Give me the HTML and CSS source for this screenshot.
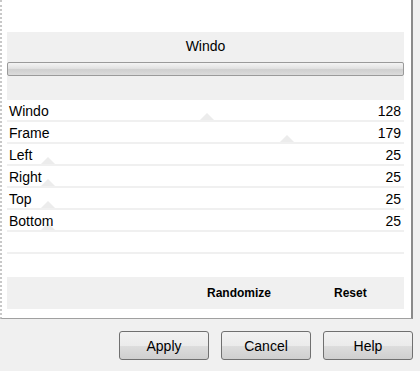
FILE: index.html
```html
<!DOCTYPE html>
<html lang="en">
<head>
  <meta charset="UTF-8">
  <title>Windo</title>
  <link rel="stylesheet" href="styles.css">
</head>
<body>
  <div class="panel">
    <div class="header">
      <div class="title">Windo</div>
      <div class="slider"></div>
    </div>

    <div class="rows">
      <div class="row"><span class="thumb" style="left: 193px;"></span><span>Windo</span><span>128</span></div>
      <div class="row"><span class="thumb" style="left: 273px;"></span><span>Frame</span><span>179</span></div>
      <div class="row"><span class="thumb" style="left: 34px;"></span><span>Left</span><span>25</span></div>
      <div class="row"><span class="thumb" style="left: 34px;"></span><span>Right</span><span>25</span></div>
      <div class="row"><span class="thumb" style="left: 34px;"></span><span>Top</span><span>25</span></div>
      <div class="row"><span class="thumb" style="left: 34px;"></span><span>Bottom</span><span>25</span></div>
      <div class="row"></div>
    </div>

    <div class="footer">
      <span class="randomize">Randomize</span>
      <span class="reset">Reset</span>
    </div>
  </div>

  <div class="buttons">
    <button class="btn">Apply</button>
    <button class="btn">Cancel</button>
    <button class="btn">Help</button>
  </div>
</body>
</html>
```

FILE: styles.css
```css
body {
  margin: 0;
  background: #f0f0f0;
  font-family: "Liberation Sans", Arial, sans-serif;
  font-size: 14px;
  color: #000;
}

.panel {
  box-sizing: border-box;
  width: 413px;
  height: 319px;
  padding: 32px 7px 0 5px;
  background: #fff;
  border-left: 2px dotted #c8c8c8;
  border-right: 2px solid #8a8a8a;
  border-bottom: 1px solid #a0a0a0;
}

.header {
  height: 68px;
  padding-top: 6px;
  box-sizing: border-box;
  background: #f0f0f0;
}

.title {
  text-align: center;
  line-height: 16px;
}

.slider {
  margin-top: 8px;
  height: 14px;
  box-sizing: border-box;
  border: 1px solid #9a9a9a;
  border-radius: 2px;
  background: linear-gradient(to bottom, #f4f4f4 0%, #e2e2e2 45%, #cfcfcf 55%, #dcdcdc 100%);
}

.row {
  position: relative;
  height: 22px;
  box-sizing: border-box;
  border-bottom: 2px solid #f0f0f0;
  padding: 2px 3px 0 2px;
  display: flex;
  justify-content: space-between;
  align-items: center;
  line-height: 18px;
}

.row span {
  position: relative;
}

.row .thumb {
  position: absolute;
  bottom: 0;
  width: 0;
  height: 0;
  border-left: 7px solid transparent;
  border-right: 7px solid transparent;
  border-bottom: 7px solid #ececec;
}

.footer {
  margin-top: 23px;
  height: 32px;
  background: #f0f0f0;
  display: flex;
  align-items: center;
  padding-left: 200px;
  font-size: 12px;
  font-weight: bold;
}

.reset {
  margin-left: 63px;
}

.buttons {
  display: flex;
  justify-content: flex-end;
  gap: 12px;
  padding: 12px 7px 0 0;
}

.btn {
  width: 90px;
  height: 29px;
  border: 1px solid #707070;
  border-radius: 3px;
  background: linear-gradient(to bottom, #f2f2f2 0%, #ebebeb 50%, #dddddd 51%, #cfcfcf 100%);
  font-family: "Liberation Sans", Arial, sans-serif;
  font-size: 14px;
  color: #000;
  padding: 0;
}
```
